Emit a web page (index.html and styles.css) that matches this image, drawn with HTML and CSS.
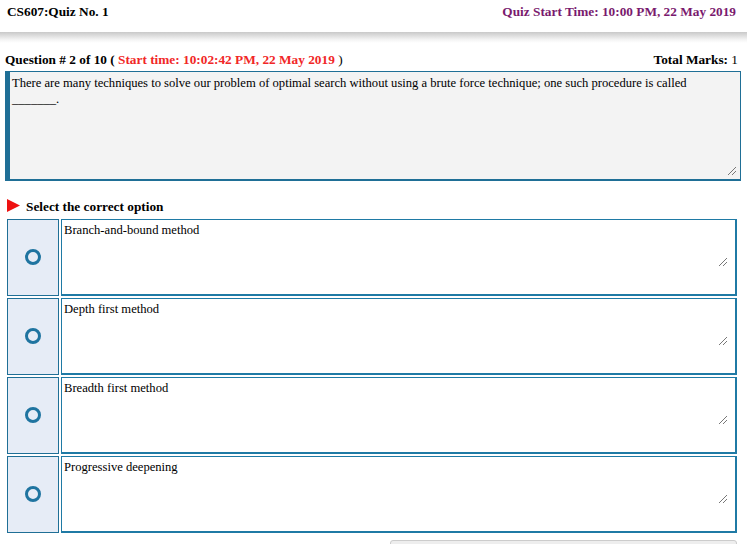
FILE: index.html
```html
<!DOCTYPE html>
<html>
<head>
<meta charset="utf-8">
<link rel="stylesheet" href="styles.css">
</head>
<body>
<header class="topbar">
  <div class="course">CS607:Quiz No. 1</div>
  <div class="quiz-start">Quiz Start Time: 10:00 PM, 22 May 2019</div>
</header>
<div class="shadow"></div>
<main class="content">
  <div class="qline">
    <div class="qnum">Question # 2 of 10 ( <span class="stime">Start time: 10:02:42 PM, 22 May 2019</span> <span class="plain">)</span></div>
    <div class="marks">Total Marks: <span class="plain">1</span></div>
  </div>
  <div class="question">
    <div class="qtext">There are many techniques to solve our problem of optimal search without using a brute force technique; one such procedure is called _______.</div>
    <span class="grip"></span>
  </div>
  <div class="select">
    <svg class="tri" width="13" height="13" viewBox="0 0 13 13"><polygon points="0,0 13,6.5 0,13" fill="#ee1111"/></svg>
    <span>Select the correct option</span>
  </div>
  <div class="options">
    <div class="opt">
      <div class="radio-cell"><span class="ring"></span></div>
      <div class="answer"><div class="atext">Branch-and-bound method</div><span class="grip"></span></div>
    </div>
    <div class="opt">
      <div class="radio-cell"><span class="ring"></span></div>
      <div class="answer"><div class="atext">Depth first method</div><span class="grip"></span></div>
    </div>
    <div class="opt">
      <div class="radio-cell"><span class="ring"></span></div>
      <div class="answer"><div class="atext">Breadth first method</div><span class="grip"></span></div>
    </div>
    <div class="opt">
      <div class="radio-cell"><span class="ring"></span></div>
      <div class="answer"><div class="atext">Progressive deepening</div><span class="grip"></span></div>
    </div>
  </div>
  <div class="btnrow"><div class="btn"></div></div>
</main>
</body>
</html>
```
FILE: styles.css
```css
html, body {
  margin: 0;
  padding: 0;
  background: #ffffff;
  font-family: "Liberation Serif", "Times New Roman", serif;
  color: #000;
  overflow: hidden;
}
.topbar {
  height: 32px;
  box-sizing: border-box;
  display: flex;
  justify-content: space-between;
  align-items: flex-start;
  padding: 4px 11px 0 7px;
  font-weight: bold;
  font-size: 13.3px;
}
.quiz-start {
  color: #7a1a6e;
}
.shadow {
  height: 11px;
  background: linear-gradient(to bottom, #c9c9c9, #f4f4f4 70%, #ffffff);
}
.content {
  padding: 0 6px 0 5px;
}
.qline {
  display: flex;
  justify-content: space-between;
  align-items: baseline;
  font-size: 13.3px;
  font-weight: bold;
  margin-top: 9px;
  height: 19px;
  padding-right: 3px;
}
.stime {
  color: #f12727;
}
.plain {
  font-weight: normal;
}
.question {
  position: relative;
  height: 104px;
  background: #f3f3f3;
  border: 1px solid #1f6f96;
  border-left: 5px solid #1f6f96;
  border-bottom-width: 2px;
  padding: 3px 3px 0 2px;
  font-size: 12.6px;
  line-height: 16px;
}
.qtext {
  padding-right: 10px;
}
.grip {
  position: absolute;
  right: 4px;
  bottom: 4px;
  width: 8px;
  height: 8px;
  background: linear-gradient(135deg, transparent 45%, #777 45%, #777 52%, transparent 52%, transparent 70%, #777 70%, #777 77%, transparent 77%);
}
.select {
  display: flex;
  align-items: center;
  margin: 17px 0 0 2px;
  height: 18px;
  font-weight: bold;
  font-size: 13.3px;
  gap: 6px;
}
.tri {
  margin-top: -3px;
}
.options {
  display: flex;
  flex-direction: column;
  gap: 2px;
  margin: 3px 4px 0 2px;
}
.opt {
  display: flex;
  gap: 2px;
  height: 77px;
}
.radio-cell {
  width: 50px;
  flex: none;
  background: #e6ecf6;
  border: 1px solid #1f6f96;
  display: flex;
  align-items: center;
  justify-content: center;
}
.ring {
  width: 10px;
  height: 10px;
  border: 3px solid #1f74a0;
  border-radius: 50%;
  margin-left: -1px;
  margin-top: -2px;
}
.answer {
  position: relative;
  flex: 1;
  border: 2px solid #1f7aa5;
  border-width: 1px 2px 2px 1px;
  font-size: 12.6px;
  line-height: 16px;
  padding: 2px 2px 0 2px;
}
.answer .grip {
  bottom: 28px;
  right: 8px;
}
.btnrow {
  display: flex;
  justify-content: flex-end;
  margin-top: 7px;
  padding-right: 4px;
}
.btn {
  width: 345px;
  height: 20px;
  background: #eeeeee;
  border: 1px solid #cccccc;
  border-radius: 3px;
}
```
